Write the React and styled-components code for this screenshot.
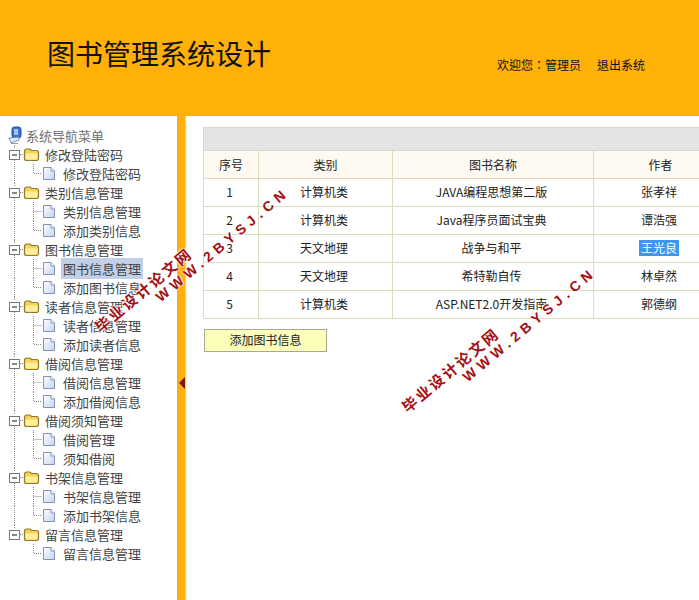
import React from 'react';
import styled, { createGlobalStyle } from 'styled-components';

const font = '"Noto Sans CJK SC", "Liberation Sans", sans-serif';

const GlobalStyle = createGlobalStyle`
  html, body {
    margin: 0;
    padding: 0;
    background: #fff;
    height: 100%;
    overflow: hidden;
  }
`;

const Page = styled.div`
  position: relative;
  width: 699px;
  height: 600px;
  overflow: hidden;
  font-family: ${font};
  font-size: 12px;
  color: #222;
`;

// Topo
const Header = styled.header`
  height: 116px;
  background: #ffb108;
  display: flex;
  justify-content: space-between;
  box-sizing: border-box;
  padding: 33px 54px 0 47px;
`;

const Title = styled.h1`
  margin: 0;
  font-size: 28px;
  font-weight: 400;
  line-height: 40px;
  color: #111;
`;

const UserBar = styled.div`
  display: flex;
  gap: 16px;
  padding-top: 22px;
  line-height: 20px;
  color: #111;
  font-family: "Noto Sans CJK TC", "Liberation Sans", sans-serif;
`;

const Body = styled.div`
  display: flex;
  height: 484px;
`;

// Menu lateral
const Sidebar = styled.nav`
  width: 177px;
  flex: none;
  box-sizing: border-box;
  padding: 10px 0 0 5px;
  overflow: hidden;
  font-size: 13px;
  color: #444;
`;

const Row = styled.div`
  display: flex;
  align-items: center;
  height: 19px;
  white-space: nowrap;
`;

const RootLabel = styled.span`
  margin-left: 3px;
  color: #707070;
`;

const GroupLabel = styled.span`
  margin-left: 5px;
`;

const ItemLabel = styled.span`
  margin-left: 5px;
  padding: 0 2px;
  line-height: 21px;
  background: ${(p) => (p.$active ? '#c2d0e7' : 'transparent')};
`;

const Splitter = styled.div`
  width: 10px;
  flex: none;
  display: flex;
  align-items: center;
  background: linear-gradient(90deg, #f5a52a 0, #ffb10e 25%, #ffb10e 78%, #ffe9b0 90%, #fff 100%);
`;

const Arrow = styled.span`
  width: 0;
  height: 0;
  margin: 49px 0 0 2px;
  border-top: 6px solid transparent;
  border-bottom: 6px solid transparent;
  border-right: 6px solid #85140c;
`;

// Conteúdo
const Main = styled.main`
  flex: 1;
  min-width: 0;
  overflow: hidden;
  padding: 11px 0 0 16px;
`;

const Table = styled.table`
  border-collapse: collapse;
  table-layout: fixed;
  width: 524px;
  color: #222;
`;

const Caption = styled.td`
  height: 22px;
  padding: 0;
  background: #e4e4e4;
  border: 1px solid #dcdcbc;
`;

const Th = styled.th`
  height: 26px;
  padding: 0 0 1px;
  font-weight: 400;
  background: #fffaf1;
  border: 1px solid #dcdcbc;
`;

const Td = styled.td`
  height: 25px;
  padding: 0 3px 2px 0;
  text-align: center;
  border: 1px solid #dcdcbc;
`;

const Selected = styled.span`
  display: inline-block;
  padding: 0 2px;
  line-height: 16px;
  color: #fff;
  background: #3c97ee;
`;

const AddButton = styled.button`
  display: block;
  width: 123px;
  height: 23px;
  margin: 10px 0 0 1px;
  padding: 0 0 2px;
  font: inherit;
  color: #222;
  background: #fbfdb9;
  border: 1px solid #aaa98f;
`;

// Marca d'água
const Watermark = styled.div`
  position: absolute;
  left: ${(p) => p.$x}px;
  top: ${(p) => p.$y}px;
  transform: rotate(-40deg);
  transform-origin: left top;
  white-space: nowrap;
  font-weight: 700;
  color: #a30f12;
  text-shadow: 0 0 2px #fff, 0 0 2px #fff, 0 0 2px #fff;
`;

const MarkCn = styled.div`
  font-size: 15px;
  line-height: 18px;
  letter-spacing: 2.4px;
`;

const MarkEn = styled.div`
  margin: -1px 0 0 66px;
  font-family: "Liberation Sans", sans-serif;
  font-size: 14px;
  line-height: 16px;
  letter-spacing: 4.8px;
`;

const Cell = styled.svg`
  display: block;
  flex: none;
  width: ${(p) => p.width}px;
  height: 19px;
`;

const dots = { stroke: '#8a8a8a', strokeWidth: 1, strokeDasharray: '1 1', fill: 'none' };

// Caixa com o sinal de menos e as linhas pontilhadas
const MinusCell = ({ last }) => (
  <Cell width="18" viewBox="0 0 18 19">
    <path d={last ? 'M9.5 0V4' : 'M9.5 0V4M9.5 15V19'} {...dots} />
    <path d="M15 9.5H18" {...dots} />
    <rect x="4.5" y="5.5" width="10" height="9" fill="#fff" stroke="#777" />
    <path d="M7 10H12" stroke="#111" />
  </Cell>
);

const LineCell = ({ show }) => (
  <Cell width="18" viewBox="0 0 18 19">
    {show && <path d="M9.5 0V19" {...dots} />}
  </Cell>
);

const JoinCell = ({ last }) => (
  <Cell width="19" viewBox="0 0 19 19">
    <path d={last ? 'M10.5 0V9.5H19' : 'M10.5 0V19M10.5 9.5H19'} {...dots} />
  </Cell>
);

const FolderIcon = () => (
  <Cell width="17" viewBox="0 0 17 19">
    <path d="M1.5 6.5Q1.5 4 4 4H7L8.5 5.5H13.5Q15.5 5.5 15.5 7.5V13Q15.5 15.5 13.5 15.5H3.5Q1.5 15.5 1.5 13.5Z" fill="#f7d25a" stroke="#8f7a2e" strokeWidth="1.2" />
    <path d="M2.5 8.5H14.5V13Q14.5 14.5 13 14.5H4Q2.5 14.5 2.5 13Z" fill="#ffee9a" />
  </Cell>
);

const PageIcon = () => (
  <Cell width="14" viewBox="0 0 14 19">
    <defs>
      <linearGradient id="pageFill" x1="0" y1="0" x2="1" y2="1">
        <stop offset="0" stopColor="#ffffff" />
        <stop offset="1" stopColor="#c4d4f0" />
      </linearGradient>
    </defs>
    <path d="M1.5 3.5H9L12.5 7V15.5H1.5Z" fill="url(#pageFill)" stroke="#7f93b8" />
    <path d="M9 3.5V7H12.5" fill="#fff" stroke="#7f93b8" />
  </Cell>
);

const ComputerIcon = () => (
  <Cell width="18" viewBox="0 0 18 19">
    <rect x="7" y="1" width="9" height="11" rx="2.5" fill="#3f6fc8" stroke="#2b4e98" />
    <rect x="9" y="3" width="4" height="6" fill="#9cc6f5" />
    <path d="M4 12L14 11V14L6 17Z" fill="#dfe8f8" stroke="#5f7fbe" strokeWidth=".8" />
    <path d="M6 17.5H13" stroke="#9a9a9a" />
  </Cell>
);

const menu = [
  { name: '修改登陆密码', items: ['修改登陆密码'] },
  { name: '类别信息管理', items: ['类别信息管理', '添加类别信息'] },
  { name: '图书信息管理', items: ['图书信息管理', '添加图书信息'] },
  { name: '读者信息管理', items: ['读者信息管理', '添加读者信息'] },
  { name: '借阅信息管理', items: ['借阅信息管理', '添加借阅信息'] },
  { name: '借阅须知管理', items: ['借阅管理', '须知借阅'] },
  { name: '书架信息管理', items: ['书架信息管理', '添加书架信息'] },
  { name: '留言信息管理', items: ['留言信息管理'] },
];

const columns = [55, 134, 201, 134];

const books = [
  [1, '计算机类', 'JAVA编程思想第二版', '张孝祥'],
  [2, '计算机类', 'Java程序员面试宝典', '谭浩强'],
  [3, '天文地理', '战争与和平', '王光良'],
  [4, '天文地理', '希特勒自传', '林卓然'],
  [5, '计算机类', 'ASP.NET2.0开发指南', '郭德纲'],
];

const Mark = ({ x, y }) => (
  <Watermark $x={x} $y={y}>
    <MarkCn>毕业设计论文网</MarkCn>
    <MarkEn>WWW.2BYSJ.CN</MarkEn>
  </Watermark>
);

export default function App() {
  return (
    <Page>
      <GlobalStyle />
      <Header>
        <Title>图书管理系统设计</Title>
        <UserBar>
          <span>欢迎您：管理员</span>
          <span>退出系统</span>
        </UserBar>
      </Header>
      <Body>
        <Sidebar>
          <Row>
            <ComputerIcon />
            <RootLabel>系统导航菜单</RootLabel>
          </Row>
          {menu.map((group, g) => {
            const lastGroup = g === menu.length - 1;
            return (
              <div key={group.name}>
                <Row>
                  <MinusCell last={lastGroup} />
                  <FolderIcon />
                  <GroupLabel>{group.name}</GroupLabel>
                </Row>
                {group.items.map((item, i) => (
                  <Row key={item}>
                    <LineCell show={!lastGroup} />
                    <JoinCell last={i === group.items.length - 1} />
                    <PageIcon />
                    <ItemLabel $active={g === 2 && i === 0}>{item}</ItemLabel>
                  </Row>
                ))}
              </div>
            );
          })}
        </Sidebar>
        <Splitter>
          <Arrow />
        </Splitter>
        <Main>
          <Table>
            <colgroup>
              {columns.map((w, i) => (
                <col key={i} width={w} />
              ))}
            </colgroup>
            <thead>
              <tr>
                <Caption colSpan={4} />
              </tr>
              <tr>
                <Th>序号</Th>
                <Th>类别</Th>
                <Th>图书名称</Th>
                <Th>作者</Th>
              </tr>
            </thead>
            <tbody>
              {books.map((b) => (
                <tr key={b[0]}>
                  <Td>{b[0]}</Td>
                  <Td>{b[1]}</Td>
                  <Td>{b[2]}</Td>
                  <Td>{b[0] === 3 ? <Selected>{b[3]}</Selected> : b[3]}</Td>
                </tr>
              ))}
            </tbody>
          </Table>
          <AddButton>添加图书信息</AddButton>
        </Main>
      </Body>
      <Mark x={91} y={322} />
      <Mark x={398} y={402} />
    </Page>
  );
}
